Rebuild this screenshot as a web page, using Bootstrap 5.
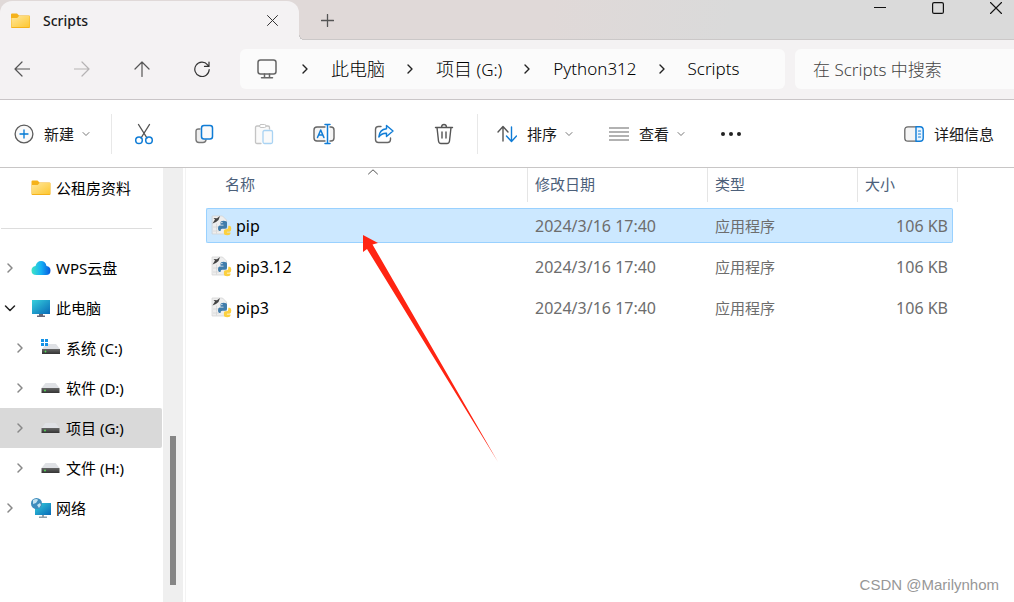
<!DOCTYPE html>
<html lang="zh-CN">
<head>
<meta charset="utf-8">
<meta name="viewport" content="width=device-width, initial-scale=1">
<title>Scripts</title>
<link href="https://cdn.jsdelivr.net/npm/bootstrap@5.3.0/dist/css/bootstrap.min.css" rel="stylesheet">
<script src="https://cdn.jsdelivr.net/npm/bootstrap@5.3.0/dist/js/bootstrap.bundle.min.js" defer></script>
<style>
  body { font-family: "Noto Sans", "Noto Sans CJK SC", sans-serif; font-size: 15px; line-height: 20px; color: #1a1a1a; background: #fff; }
  svg { display: block; flex: none; fill: none; stroke-linecap: round; stroke-linejoin: round; }
  button { background: none; border: 0; padding: 0; color: inherit; display: flex; align-items: center; }
  a { color: inherit; text-decoration: none; }
  .titlebar { height: 40px; background: linear-gradient(100deg, #e0d9d8 0 54%, #dadada 72%); box-shadow: inset 0 -1px #cbc8c8; }
  .window-tab { width: 299px; background: #f4f2f3; border-radius: 12px 12px 0 0; padding: 0 20px 0 11px; margin-top: 1px; }
  .window-tab::after { content: ""; position: absolute; left: 100%; bottom: 0; width: 5px; height: 5px; background: radial-gradient(circle at 5px 0, transparent 4px, #cbc8c8 4px 5px, #f4f2f3 5px); }
  .tab-name { font-size: 14px; font-weight: 500; margin-left: 13px; }
  .add-tab { margin-left: 22px; }
  .win-controls { gap: 46px; padding: 2px 12px 0 0; }
  .addressbar { background: #f4f2f3; height: 60px; gap: 10px; padding-bottom: 1px; border-bottom: 1px solid #c9c5c7; font-size: 17px; font-weight: 300; }
  .nav-buttons { gap: 16px; margin-right: 6px; }
  .nav-buttons button { width: 44px; height: 40px; justify-content: center; }
  .path-box { background: #fbfbfb; height: 40px; border-radius: 6px; padding-left: 17px; color: #000; }
  .path-box ol { padding: 0; margin: 0 0 0 24px; list-style: none; gap: 21px; }
  .path-box li { gap: 22px; }
  .han { font-size: 18px; }
  .search-box { width: 219px; }
  .search-box input { width: 100%; height: 40px; border: 0; border-radius: 6px 0 0 6px; background: #fbfbfb; padding: 0 18px; font-size: 17px; font-weight: inherit; outline: 0; }
  .search-box input::placeholder { color: #444; opacity: 1; }
  .commands { height: 68px; border-bottom: 1px solid #c8c6c6; }
  .menu-btn { gap: 10px; height: 40px; padding-left: 36px; }
  .menu-btn .chev { margin-left: -2px; }
  .new-btn { padding: 0 21px 0 14px; }
  .sort-btn { padding-left: 19px; }
  .tool-btn { width: 60px; height: 40px; justify-content: center; }
  .divider { width: 1px; height: 40px; background: #e8e8e8; }
  .tools { padding: 0 3px 0 2px; }
  .tree { width: 163px; }
  .tree a { height: 40px; color: #000; margin-right: 1px; padding-left: 4px; }
  .tree .twist { width: 12px; margin-right: 14px; }
  .tree .kid { padding-left: 14px; }
  .tree .kid .twist { margin-right: 13px; }
  .tree svg.ico { margin-right: 4px; }
  .tree .on { background: #d9d9d9; border-radius: 0 2px 2px 0; }
  .tree hr { margin: 20px 11px 19px 1px; border-color: #777; }
  .scroll { width: 20px; background: #efefef; padding: 0 7px; }
  .scroll .before { flex: 268; } .scroll .thumb { flex: 149; background: #868686; } .scroll .after { flex: 17; }
  .pane { border-left: 1px solid #f3f3f3; margin-left: 2px; padding-left: 20px; }
  .files { table-layout: fixed; width: 752px; border-collapse: separate; border-spacing: 0 6px; margin-top: -6px; }
  .files th { height: 34px; font-weight: 400; color: #4c607a; padding: 0 0 2px 7px; border-right: 1px solid #e5e5e5; }
  .files th:first-child { padding-left: 19px; }
  .files td { height: 35px; font-size: 16px; color: #6d6d6d; padding: 0 4px 0 7px; border: 1px solid transparent; border-width: 1px 0; }
  .files td:first-child { border-left-width: 1px; padding-left: 4px; color: #000; }
  .files td.size { border-right-width: 1px; text-align: right; }
  .files td.kind { font-size: 15px; }
  .files .picked td:not(.edge) { background: #cce8ff; border-color: #99d1ff; }
  .files .picked td:first-child { border-radius: 2px 0 0 2px; } .files .picked td.size { border-radius: 0 2px 2px 0; }
  .sort-mark { position: absolute; left: 182px; top: 1px; }
  .pointer-arrow { position: absolute; left: 176px; top: 66px; pointer-events: none; }
  .credit { position: absolute; right: 15px; bottom: 7px; font-family: "Liberation Sans", sans-serif; font-size: 15px; font-weight: 400; color: #979797; }
</style>
</head>
<body>
<svg width="0" height="0" class="position-absolute" aria-hidden="true">
  <defs>
    <linearGradient id="gold" x2="1" y2="1"><stop stop-color="#ffe79b"/><stop offset="1" stop-color="#fdc732"/></linearGradient>
    <linearGradient id="sea" x2="1" y2="1"><stop stop-color="#36d0dc"/><stop offset="1" stop-color="#0869b8"/></linearGradient>
    <linearGradient id="cloud"><stop stop-color="#3fe5c5"/><stop offset=".5" stop-color="#16b1f4"/><stop offset="1" stop-color="#0758dd"/></linearGradient>
    <linearGradient id="metal" x2="0" y2="1"><stop stop-color="#666"/><stop offset="1" stop-color="#333"/></linearGradient>
  </defs>
  <symbol id="folder" viewBox="0 0 19 16"><path fill="#f5b21b" d="M0 1.500Q0 .5 1 .5h5l2 2h10q1 0 1 1V14q0 1-1 1H1q-1 0-1-1z"/><path fill="url(#gold)" d="M.4 5h5.800l1.800-2H18.600v11H.4z"/></symbol>
  <symbol id="down" viewBox="0 0 8 8"><path stroke="#777" d="M1 2.500 4 5.500 7 2.500"/></symbol>
  <symbol id="right" viewBox="0 0 12 12"><path stroke="#888" stroke-width="1.500" d="M4 2l4 4-4 4"/></symbol>
  <symbol id="crumb" viewBox="0 0 8 12"><path stroke="#222" stroke-width="1.400" d="M2 2l4 4-4 4"/></symbol>
  <symbol id="disk" viewBox="0 0 18 14"><path fill="#dfe1e5" d="M4 2h10l4 5H0z"/><path fill="url(#metal)" d="M0 7h18v5H0z"/><circle cx="3.500" cy="9.500" r=".9" fill="#54e058"/></symbol>
  <symbol id="pyexe" viewBox="0 0 20 22">
    <path fill="#eee" stroke="#d0d0d0" stroke-width=".7" d="M1 1h10l4 4v14H1z"/><path stroke="#ccc" stroke-width=".6" stroke-dasharray="1 1" d="M2 12h6M2 16h6M5 9v9"/>
    <path fill="#444" d="M1 8.500 3.500 4.500 2 3 5.500 3.300 8.500 1 7 5 4.500 7z"/>
    <path fill="#3f7cab" d="M9 7.500q0-1.800 3.200-1.800t3.300 1.800V12q0 1.800-1.800 1.800h-3Q9 13.800 9 16H7.800q-1.300 0-1.300-2.800t1.800-2.700H12v-.8H9z"/>
    <path fill="#fcd03f" d="M19 18q0 2.200-3.300 2.200T12.400 18v-2.200q0-1.600 1.600-1.600h1.500q1.300-.2 1.300-2.200v-1.200H18q1.800 0 1.800 2.800t-1.800 3.200h-2.600v.6H19z"/>
    <circle cx="10.400" cy="7.600" r=".7" fill="#fff"/>
  </symbol>
</svg>

<div class="d-flex flex-column min-vh-100">
  <header>
    <div class="titlebar d-flex">
      <div class="window-tab position-relative d-flex align-items-center">
        <svg width="19" height="16"><use href="#folder"/></svg>
        <span class="tab-name">Scripts</span>
        <button class="ms-auto" aria-label="关闭标签页"><svg width="13" height="13" viewBox="0 0 13 13"><path stroke="#333" d="M1.500 1.500l10 10M11.500 1.500l-10 10"/></svg></button>
      </div>
      <button class="add-tab" aria-label="新标签页"><svg width="13" height="13" viewBox="0 0 13 13"><path stroke="#555" stroke-width="1.300" d="M6.500.5v12M.5 6.500h12"/></svg></button>
      <div class="win-controls d-flex align-items-start ms-auto">
        <button aria-label="最小化"><svg width="12" height="12" viewBox="0 0 12 12"><path stroke="#111" d="M0 5.500h12"/></svg></button>
        <button aria-label="最大化"><svg width="12" height="12" viewBox="0 0 12 12"><rect x=".6" y=".6" width="10.800" height="10.800" rx="1.500" stroke="#111" stroke-width="1.200"/></svg></button>
        <button aria-label="关闭"><svg width="12" height="12" viewBox="0 0 12 12"><path stroke="#111" stroke-width="1.100" d="M.5.5l11 11M11.500.5l-11 11"/></svg></button>
      </div>
    </div>

    <div class="addressbar d-flex align-items-center">
      <nav class="nav-buttons d-flex" aria-label="导航">
        <button aria-label="后退"><svg width="16" height="16" viewBox="0 0 16 16"><path stroke="#555" stroke-width="1.200" d="M15.500 8H1M8 1 1 8l7 7"/></svg></button>
        <button aria-label="前进" disabled><svg width="16" height="16" viewBox="0 0 16 16"><path stroke="#b5b3b4" stroke-width="1.200" d="M.5 8H15M8 1l7 7-7 7"/></svg></button>
        <button aria-label="向上"><svg width="16" height="16" viewBox="0 0 16 16"><path stroke="#555" stroke-width="1.200" d="M8 15.500V1M1 8l7-7 7 7"/></svg></button>
        <button aria-label="刷新"><svg width="16" height="16" viewBox="0 0 16 16"><path stroke="#333" stroke-width="1.200" d="M15.200 8.500a7.200 7.200 0 1 1-1.600-4.700L15 5.400M15 1v4.400h-4.500"/></svg></button>
      </nav>
      <nav class="path-box d-flex align-items-center flex-grow-1" aria-label="路径">
        <svg width="20" height="20" viewBox="0 0 20 20"><g stroke="#666" stroke-width="1.500"><rect x="1" y="1" width="18" height="14" rx="2.500"/><path d="M7.500 15v3M12.500 15v3M4.500 18.800h11"/></g></svg>
        <ol class="d-flex">
          <li class="d-flex align-items-center"><svg width="8" height="12"><use href="#crumb"/></svg><a href="#" class="han">此电脑</a></li>
          <li class="d-flex align-items-center"><svg width="8" height="12"><use href="#crumb"/></svg><a href="#"><span class="han">项目</span> (G:)</a></li>
          <li class="d-flex align-items-center"><svg width="8" height="12"><use href="#crumb"/></svg><a href="#">Python312</a></li>
          <li class="d-flex align-items-center"><svg width="8" height="12"><use href="#crumb"/></svg><a href="#">Scripts</a></li>
        </ol>
      </nav>
      <div class="search-box"><input type="search" aria-label="搜索" placeholder="在 Scripts 中搜索"></div>
    </div>

    <div class="commands d-flex align-items-center">
      <button class="menu-btn new-btn">
        <svg width="20" height="20" viewBox="0 0 20 20"><circle cx="10" cy="10" r="8.900" stroke="#5c5c5c" stroke-width="1.300" fill="#fafafa"/><path stroke="#0078d4" stroke-width="1.300" d="M10 6v8M6 10h8"/></svg>
        新建<svg class="chev" width="8" height="8"><use href="#down"/></svg>
      </button>
      <span class="divider"></span>
      <div class="tools d-flex">
        <button class="tool-btn" aria-label="剪切"><svg width="20" height="22" viewBox="0 0 20 22"><path stroke="#555" stroke-width="1.400" d="M4.500 1.500 13 15M15.500 1.500 7 15"/><g stroke="#0f7cd6" stroke-width="1.500"><circle cx="5" cy="17.300" r="3.300"/><circle cx="15" cy="17.300" r="3.300"/></g></svg></button>
        <button class="tool-btn" aria-label="复制"><svg width="20" height="20" viewBox="0 0 20 20"><path stroke="#777" stroke-width="1.400" fill="#eee" d="M6 5H4.500Q2 5 2 7.500v8q0 3 3 3h4q2.500 0 3-2.500"/><rect x="7.500" y="1.500" width="11" height="13.500" rx="2.500" stroke="#0f7cd6" stroke-width="1.500" fill="#fafafa"/></svg></button>
        <button class="tool-btn" aria-label="粘贴" disabled><svg width="20" height="22" viewBox="0 0 20 22"><path stroke="#c4c4c4" stroke-width="1.300" fill="#fafafa" d="M7 20.500H3q-1.500 0-1.500-1.500V4.500Q1.500 3 3 3h11q1.500 0 1.500 1.500V6"/><rect x="5.500" y="1.500" width="6.500" height="3" rx="1.500" stroke="#c4c4c4" fill="#fff"/><rect x="9" y="7.500" width="9.500" height="13" rx="1.500" stroke="#a9d3f3" stroke-width="1.300" fill="#fafafa"/></svg></button>
        <button class="tool-btn" aria-label="重命名"><svg width="22" height="22" viewBox="0 0 22 22"><path stroke="#666" stroke-width="1.400" fill="#f5f5f5" d="M12 18H4q-3 0-3-3V7q0-3 3-3h8M17 4h1q3 0 3 3v8q0 3-3 3h-1"/><g stroke="#0f7cd6" stroke-width="1.500"><path d="M4.500 14.500 7.700 7l3.200 7.500M5.700 12h4M14.500 1.500v19M12 1.500h5M12 20.500h5"/></g></svg></button>
        <button class="tool-btn" aria-label="共享"><svg width="20" height="20" viewBox="0 0 20 20"><path stroke="#666" stroke-width="1.400" d="M7 2.500H4.500q-3 0-3 3v10q0 3 3 3h9q3 0 3-3V14"/><path stroke="#0f7cd6" stroke-width="1.400" fill="#f5fbff" d="M12.500 1.500 19 7l-6.500 5.500V9.200Q7.500 9 4.800 13 5.500 5.500 12.500 4.800z"/></svg></button>
        <button class="tool-btn" aria-label="删除"><svg width="20" height="22" viewBox="0 0 20 22"><path stroke="#555" stroke-width="1.400" d="M1.500 4.500h17M3 4.500l1.500 13.500q.3 2.500 2.500 2.500h6q2.200 0 2.500-2.500L17 4.500M7.500 4q.3-2.500 2.500-2.500T12.500 4M8 9v6M12 9v6"/></svg></button>
      </div>
      <span class="divider"></span>
      <button class="menu-btn sort-btn">
        <svg width="20" height="18" viewBox="0 0 20 18"><path stroke="#555" stroke-width="1.400" d="M6 16V2M1 7l5-5.500L11 7"/><path stroke="#0f7cd6" stroke-width="1.400" d="M14.500 2v14M9.500 11l5 5.500 5-5.500"/></svg>
        排序<svg class="chev" width="8" height="8"><use href="#down"/></svg>
      </button>
      <button class="menu-btn">
        <svg width="20" height="14" viewBox="0 0 20 14"><path stroke="#666" stroke-width="1.200" d="M.5 1h19M.5 5h19M.5 9h19M.5 13h19"/></svg>
        查看<svg class="chev" width="8" height="8"><use href="#down"/></svg>
      </button>
      <button class="menu-btn" aria-label="更多"><svg width="20" height="6" viewBox="0 0 20 6"><g fill="#222"><circle cx="2" cy="3" r="2"/><circle cx="10" cy="3" r="2"/><circle cx="18" cy="3" r="2"/></g></svg></button>
      <button class="menu-btn ms-auto me-3 pe-1">
        <svg width="20" height="16" viewBox="0 0 20 16"><path stroke="#666" stroke-width="1.300" fill="#f5f5f5" d="M12 .8H4Q.8.800.8 4v8q0 3.200 3.200 3.200h8"/><path stroke="#0f7cd6" stroke-width="1.400" fill="#e9f5ff" d="M12 .8h4q3.200 0 3.200 3.200v8q0 3.200-3.200 3.200h-4z"/><path stroke="#0f7cd6" stroke-width="1.200" d="M14.500 5h2M14.500 8h2M14.500 11h2"/></svg>
        详细信息
      </button>
    </div>
  </header>

  <main class="d-flex flex-grow-1">
    <nav class="tree flex-shrink-0" aria-label="导航窗格">
      <a href="#" class="d-flex align-items-center"><span class="twist"></span><svg class="ico" width="22" height="16"><use href="#folder"/></svg>公租房资料</a>
      <hr>
      <a href="#" class="d-flex align-items-center"><svg class="twist" width="12" height="12"><use href="#right"/></svg><svg class="ico" width="22" height="16" viewBox="0 0 22 16"><path fill="url(#cloud)" d="M6.500 15q-5 0-5-4.500 0-4 4-4.500Q7 1 11 1q4.500 0 5.500 5 4 .5 4 4.500 0 4.500-4.500 4.500z"/></svg>WPS云盘</a>
      <a href="#" class="d-flex align-items-center"><svg class="twist" width="12" height="12" viewBox="0 0 12 12"><path stroke="#222" stroke-width="1.500" d="M1.500 4 6 8.500 10.500 4"/></svg><svg class="ico" width="22" height="18" viewBox="0 0 22 18"><path fill="url(#sea)" d="M2 1h18v14H2z"/><path fill="#667" d="M9 15h4v1.500h2V18H7v-1.500h2z"/></svg>此电脑</a>
      <a href="#" class="kid d-flex align-items-center"><svg class="twist" width="12" height="12"><use href="#right"/></svg><svg class="ico" width="23" height="18" viewBox="0 0 23 18"><svg x="3" y="3" width="18" height="14"><use href="#disk"/></svg><path fill="#1592e6" d="M2 0h3v3H2zM6 0h3v3H6zM2 4h3v3H2zM6 4h3v3H6z"/></svg>系统 (C:)</a>
      <a href="#" class="kid d-flex align-items-center"><svg class="twist" width="12" height="12"><use href="#right"/></svg><svg class="ico" width="23" height="14"><use href="#disk"/></svg>软件 (D:)</a>
      <a href="#" class="kid on d-flex align-items-center" aria-current="true"><svg class="twist" width="12" height="12"><use href="#right"/></svg><svg class="ico" width="23" height="14"><use href="#disk"/></svg>项目 (G:)</a>
      <a href="#" class="kid d-flex align-items-center"><svg class="twist" width="12" height="12"><use href="#right"/></svg><svg class="ico" width="23" height="14"><use href="#disk"/></svg>文件 (H:)</a>
      <a href="#" class="d-flex align-items-center"><svg class="twist" width="12" height="12"><use href="#right"/></svg><svg class="ico" width="22" height="20" viewBox="0 0 22 20"><path fill="url(#sea)" d="M5 5h16v12H5z"/><path fill="#8fa0ab" d="M12 17h2v1.500h3V20H9v-1.500h3z"/><circle cx="6.500" cy="5.500" r="5.500" fill="#3f8dbd"/><path fill="#c4e2f0" d="M3 2q4-2 5 0L6 5 3 6zM7 7l3-2 1 2-2 3z"/></svg>网络</a>
    </nav>
    <div class="scroll d-flex flex-column flex-shrink-0" aria-hidden="true"><span class="before"></span><span class="thumb"></span><span class="after"></span></div>

    <section class="pane position-relative flex-grow-1">
      <svg class="sort-mark" width="10" height="6" viewBox="0 0 10 6"><path stroke="#555" d="M.5 5 5 .8 9.500 5"/></svg>
      <table class="files">
        <colgroup><col style="width:322px"><col style="width:180px"><col style="width:150px"><col style="width:95px"><col style="width:5px"></colgroup>
        <thead><tr><th>名称</th><th>修改日期</th><th>类型</th><th colspan="2">大小</th></tr></thead>
        <tbody>
          <tr class="picked"><td><span class="d-flex align-items-center gap-1"><svg width="21" height="22"><use href="#pyexe"/></svg>pip</span></td><td>2024/3/16 17:40</td><td class="kind">应用程序</td><td class="size">106 KB</td><td class="edge p-0"></td></tr>
          <tr><td><span class="d-flex align-items-center gap-1"><svg width="21" height="22"><use href="#pyexe"/></svg>pip3.12</span></td><td>2024/3/16 17:40</td><td class="kind">应用程序</td><td class="size">106 KB</td><td class="edge p-0"></td></tr>
          <tr><td><span class="d-flex align-items-center gap-1"><svg width="21" height="22"><use href="#pyexe"/></svg>pip3</span></td><td>2024/3/16 17:40</td><td class="kind">应用程序</td><td class="size">106 KB</td><td class="edge p-0"></td></tr>
        </tbody>
      </table>
      <svg class="pointer-arrow" width="138" height="230" viewBox="0 0 138 230" aria-hidden="true"><path fill="#ff2412" d="M1 1 16 9 10.500 10.500 136 228 5 15 1 18z"/></svg>
      <div class="credit">CSDN @Marilynhom</div>
    </section>
  </main>
</div>
</body>
</html>
